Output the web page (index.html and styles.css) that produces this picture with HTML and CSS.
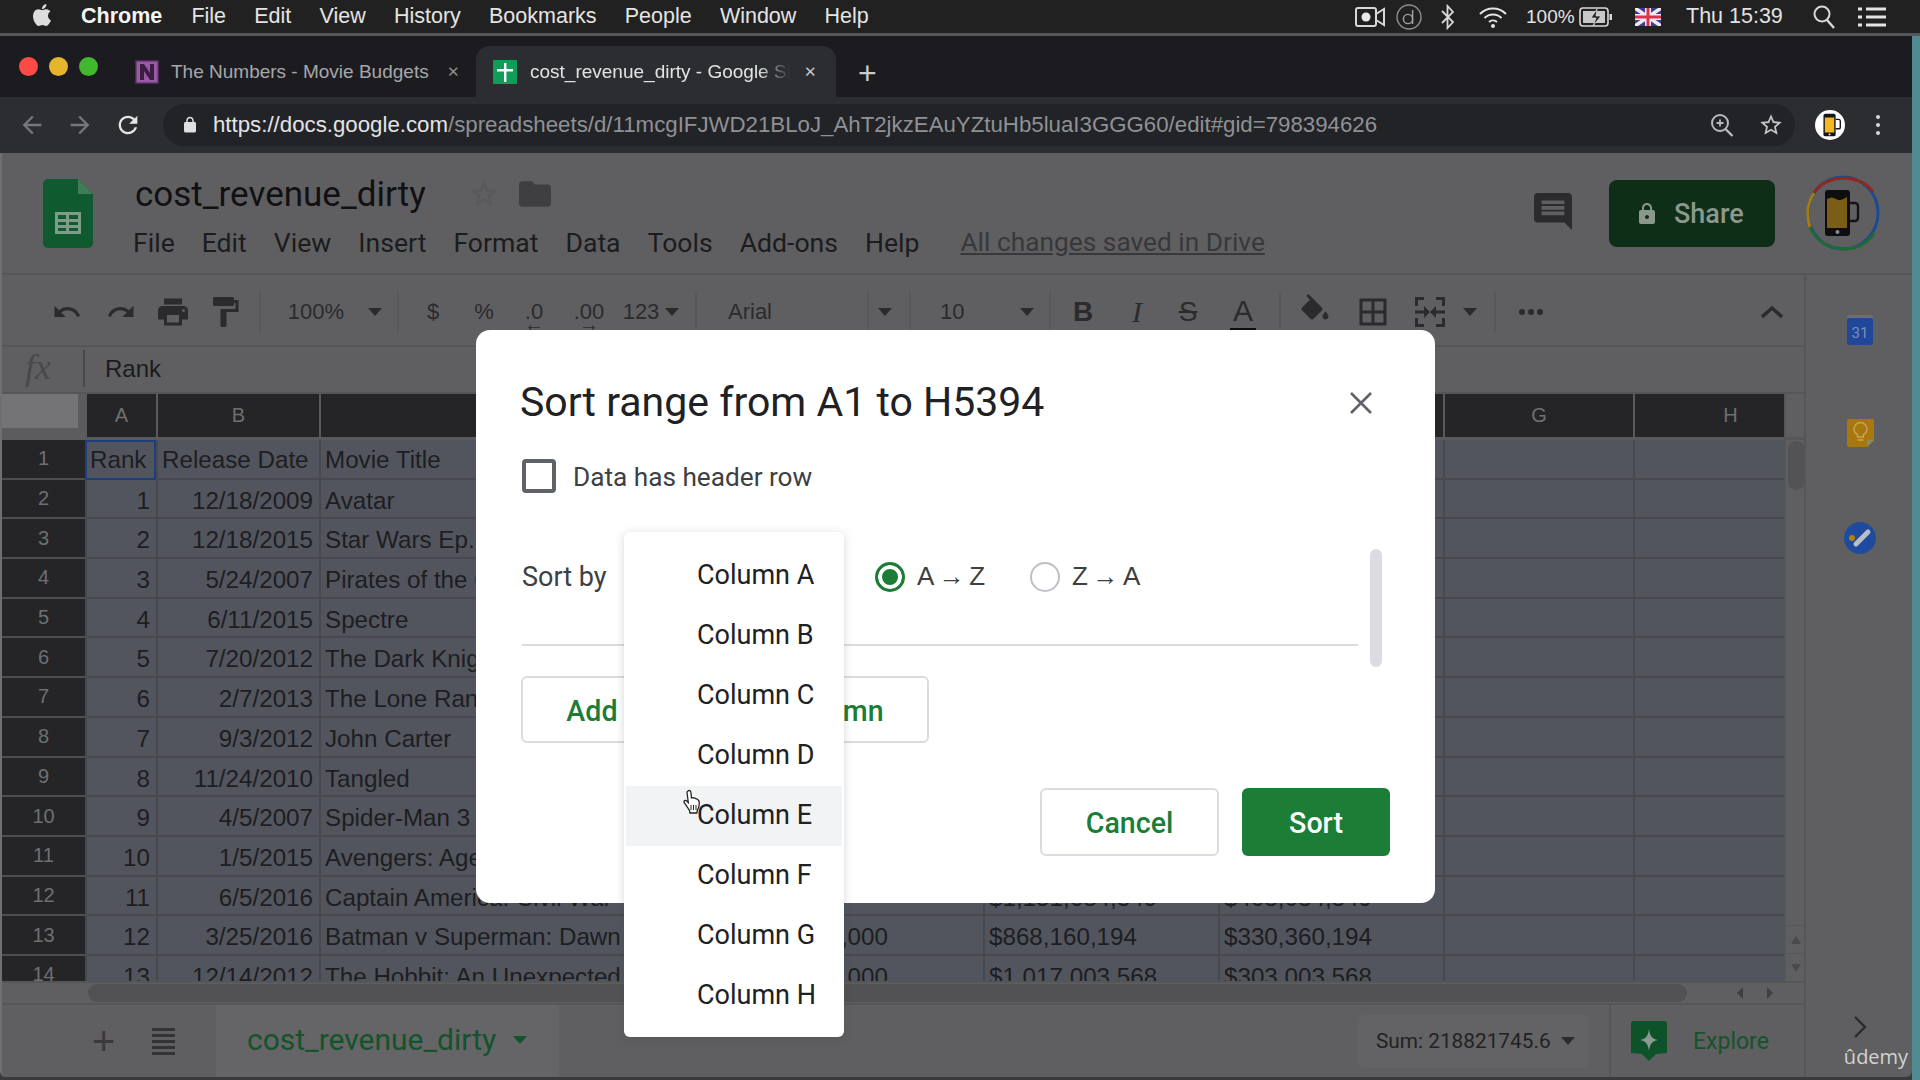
FILE: index.html
```html
<!DOCTYPE html>
<html lang="en">
<head>
<meta charset="utf-8">
<title>cost_revenue_dirty - Google Sheets</title>
<link rel="stylesheet" href="styles.css">
</head>
<body>
<div class="desktop">
<div class="window">

<header class="menubar">
  <svg class="apple" viewBox="0 0 24 24"><path d="M12.152 6.896c-.948 0-2.415-1.078-3.96-1.04-2.04.027-3.91 1.183-4.961 3.014-2.117 3.675-.546 9.103 1.519 12.09 1.013 1.454 2.208 3.09 3.792 3.039 1.52-.065 2.09-.987 3.935-.987 1.831 0 2.35.987 3.96.948 1.637-.026 2.676-1.48 3.676-2.948 1.156-1.688 1.636-3.325 1.662-3.415-.039-.013-3.182-1.221-3.22-4.857-.026-3.04 2.48-4.494 2.597-4.559-1.429-2.09-3.623-2.324-4.39-2.376-2-.156-3.675 1.09-4.61 1.09zM15.53 3.83c.843-1.012 1.4-2.427 1.245-3.83-1.207.052-2.662.805-3.532 1.818-.78.896-1.454 2.338-1.273 3.714 1.338.104 2.715-.688 3.559-1.701"/></svg>
  <nav class="mac-menu">
    <b>Chrome</b><span>File</span><span>Edit</span><span>View</span><span>History</span><span>Bookmarks</span><span>People</span><span>Window</span><span>Help</span>
  </nav>
  <div class="status">
    <svg class="st-video" viewBox="0 0 30 24"><rect x="1" y="3" width="20" height="18" rx="2" fill="none" stroke="#d8d8d8" stroke-width="2"/><circle cx="11" cy="12" r="4.5" fill="#e8e8e8"/><path d="M21 9l8-5v16l-8-5" fill="none" stroke="#d8d8d8" stroke-width="2"/></svg>
    <svg class="st-d" viewBox="0 0 26 26"><circle cx="13" cy="13" r="12" fill="none" stroke="#8e8e8e" stroke-width="1.4"/><circle cx="12" cy="15" r="4.6" fill="none" stroke="#a5a5a5" stroke-width="1.4"/><path d="M16.6 6v14" stroke="#a5a5a5" stroke-width="1.4"/></svg>
    <svg class="st-bt" viewBox="0 0 16 26"><path d="M2 7l11 11-5.5 6V2L13 8 2 19" fill="none" stroke="#d8d8d8" stroke-width="1.8"/></svg>
    <svg class="st-wifi" viewBox="0 0 30 24"><path d="M2 9a18 18 0 0 1 26 0M6.5 13a12 12 0 0 1 17 0M11 17a6 6 0 0 1 8 0" fill="none" stroke="#e4e4e4" stroke-width="2"/><circle cx="15" cy="21" r="2" fill="#e4e4e4"/></svg>
    <span class="st-pct">100%</span>
    <svg class="st-batt" viewBox="0 0 34 22"><rect x="1" y="2" width="28" height="18" rx="3" fill="none" stroke="#d8d8d8" stroke-width="1.6"/><rect x="4" y="5" width="22" height="12" fill="#c8c8c8"/><path d="M18 3l-6 9h5l-3 8 8-10h-5z" fill="#1f1f1f" stroke="#d8d8d8" stroke-width=".8"/><rect x="30.500" y="8" width="2.500" height="6" fill="#d8d8d8"/></svg>
    <svg class="st-flag" viewBox="0 0 26 18"><rect width="26" height="18" fill="#3c3f8f"/><path d="M0 0l26 18M26 0L0 18" stroke="#f3e8ee" stroke-width="3.500"/><path d="M13 0v18M0 9h26" stroke="#f3e8ee" stroke-width="6"/><path d="M13 0v18M0 9h26" stroke="#d9334f" stroke-width="3"/></svg>
    <span class="st-time">Thu 15:39</span>
    <svg class="st-search" viewBox="0 0 22 24"><circle cx="9" cy="9" r="7.500" fill="none" stroke="#d8d8d8" stroke-width="2"/><path d="M14 15l7 8" stroke="#d8d8d8" stroke-width="2.400"/></svg>
    <svg class="st-list" viewBox="0 0 28 22"><path d="M8 3h20M8 11h20M8 19h20" stroke="#e4e4e4" stroke-width="3"/><path d="M0 3h4M0 11h4M0 19h4" stroke="#e4e4e4" stroke-width="3"/></svg>
  </div>
</header>

<div class="tabstrip">
  <div class="lights"><i class="light red"></i><i class="light amber"></i><i class="light lime"></i></div>
  <div class="tab">
    <svg class="fav" viewBox="0 0 24 24"><rect width="24" height="24" fill="#4c2a55"/><rect x="1.500" y="1.500" width="21" height="21" fill="#9a5aa8"/><path d="M5 20V4h4l6 9V4h4v16h-4l-6-9v9z" fill="#3a1f42"/></svg>
    <span class="tab-title">The Numbers - Movie Budgets</span>
    <span class="tab-x">✕</span>
  </div>
  <div class="tab active">
    <svg class="fav" viewBox="0 0 24 24"><rect width="24" height="24" rx="1" fill="#0f9d58"/><path d="M11 3h2.400v19H11zM4 9h16v2.400H4z" fill="#fff"/></svg>
    <span class="tab-title fade">cost_revenue_dirty - Google Sheets</span>
    <span class="tab-x">✕</span>
  </div>
  <span class="tab-new">+</span>
</div>

<div class="toolbar">
  <svg class="nav-ic dim" viewBox="0 0 24 24"><path d="M20 11H7.830l5.590-5.590L12 4l-8 8 8 8 1.410-1.410L7.830 13H20v-2z"/></svg>
  <svg class="nav-ic dim" viewBox="0 0 24 24"><path d="M12 4l-1.410 1.410L16.170 11H4v2h12.170l-5.580 5.590L12 20l8-8z"/></svg>
  <svg class="nav-ic" viewBox="0 0 24 24"><path d="M17.650 6.350C16.200 4.900 14.210 4 12 4c-4.420 0-7.990 3.580-7.990 8s3.570 8 7.990 8c3.730 0 6.840-2.550 7.730-6h-2.080c-.82 2.330-3.040 4-5.650 4-3.310 0-6-2.690-6-6s2.690-6 6-6c1.660 0 3.140.69 4.220 1.780L13 11h7V4l-2.350 2.350z"/></svg>
  <div class="omnibox">
    <svg class="lock-ic" viewBox="0 0 24 24"><path d="M18 8h-1V6c0-2.760-2.240-5-5-5S7 3.240 7 6v2H6c-1.100 0-2 .9-2 2v10c0 1.100.9 2 2 2h12c1.100 0 2-.9 2-2V10c0-1.100-.9-2-2-2zm-2.900 0H8.900V6c0-1.710 1.390-3.100 3.100-3.100 1.710 0 3.100 1.390 3.100 3.100v2z"/></svg>
    <span class="url"><span class="url-host">https://docs.google.com</span>/spreadsheets/d/11mcgIFJWD21BLoJ_AhT2jkzEAuYZtuHb5luaI3GGG60/edit#gid=798394626</span>
    <svg class="omni-zoom" viewBox="0 0 24 24"><circle cx="10" cy="10" r="8" fill="none" stroke="#b9babd" stroke-width="2"/><path d="M15.500 16l7 7" stroke="#b9babd" stroke-width="2.400"/><path d="M6.500 10h7M10 6.500v7" stroke="#b9babd" stroke-width="1.800"/></svg>
    <svg class="omni-star" viewBox="0 0 24 24"><path d="M22 9.240l-7.190-.62L12 2 9.190 8.630 2 9.240l5.460 4.730L5.820 21 12 17.270 18.180 21l-1.630-7.030L22 9.240zM12 15.400l-3.760 2.270 1-4.280-3.320-2.880 4.380-.38L12 6.100l1.710 4.040 4.380.38-3.320 2.880 1 4.280L12 15.400z"/></svg>
  </div>
  <svg class="profile" viewBox="0 0 32 32"><circle cx="16" cy="16" r="16" fill="#fff"/><rect x="9" y="4" width="13" height="24" rx="2" fill="#16161a"/><rect x="10.500" y="8" width="10" height="16" fill="#f2b81e"/><path d="M22 10h3a2 2 0 0 1 2 2v6a2 2 0 0 1-2 2h-3" fill="none" stroke="#16161a" stroke-width="1.500"/><circle cx="15.500" cy="26" r="1" fill="#fff"/></svg>
  <span class="kebab"><i></i><i></i><i></i></span>
</div>

<main class="sheets">
  <div class="doc-head">
    <svg class="doc-logo" viewBox="0 0 50 69"><path d="M5 0h30l15 15v49a5 5 0 0 1-5 5H5a5 5 0 0 1-5-5V5a5 5 0 0 1 5-5z" fill="#0f5a2f"/><path d="M35 0l15 15H35z" fill="#3f7d57"/><path d="M12 33h26v22H12zm3 3v4h8v-4zm11 0v4h9v-4zm-11 7v3h8v-3zm11 0v3h9v-3zm-11 6v3h8v-3zm11 0v3h9v-3z" fill="#7f9c89" fill-rule="evenodd"/></svg>
    <div class="doc-main">
      <div class="doc-titlerow">
        <span class="doc-title">cost_revenue_dirty</span>
        <svg class="doc-star" viewBox="0 0 24 24"><path d="M22 9.240l-7.190-.62L12 2 9.190 8.630 2 9.240l5.460 4.730L5.820 21 12 17.270 18.180 21l-1.630-7.030L22 9.240zM12 15.400l-3.760 2.270 1-4.280-3.320-2.880 4.380-.38L12 6.100l1.710 4.040 4.380.38-3.320 2.880 1 4.280L12 15.400z"/></svg>
        <svg class="doc-folder" viewBox="2 4 20 16"><path d="M10 4H4c-1.100 0-2 .9-2 2v12c0 1.100.9 2 2 2h16c1.100 0 2-.9 2-2V8c0-1.100-.9-2-2-2h-8l-2-2z"/></svg>
      </div>
      <nav class="doc-menu">
        <span>File</span><span>Edit</span><span>View</span><span>Insert</span><span>Format</span><span>Data</span><span>Tools</span><span>Add-ons</span><span>Help</span>
        <a class="saved">All changes saved in Drive</a>
      </nav>
    </div>
    <svg class="comment" viewBox="2 2 20 20" preserveAspectRatio="none"><path d="M21.990 4c0-1.100-.89-2-1.990-2H4c-1.100 0-2 .9-2 2v12c0 1.100.9 2 2 2h14l4 4-.01-18zM18 14H6v-2h12v2zm0-3H6V9h12v2zm0-3H6V6h12v2z"/></svg>
    <div class="share">
      <svg viewBox="0 0 24 24"><path d="M18 8h-1V6c0-2.760-2.240-5-5-5S7 3.240 7 6v2H6c-1.100 0-2 .9-2 2v10c0 1.100.9 2 2 2h12c1.100 0 2-.9 2-2V10c0-1.100-.9-2-2-2zm-6 9c-1.100 0-2-.9-2-2s.9-2 2-2 2 .9 2 2-.9 2-2 2zm3.100-9H8.900V6c0-1.710 1.390-3.100 3.100-3.100 1.710 0 3.100 1.390 3.100 3.100v2z"/></svg>
      <span>Share</span>
    </div>
    <svg class="account" viewBox="0 0 74 76">
      <ellipse cx="37" cy="38" rx="35" ry="36" fill="none" stroke="#1b4a94" stroke-width="3"/>
      <path d="M4 52C.5 41 1 28 8 18" fill="none" stroke="#a67c0e" stroke-width="3"/>
      <path d="M8 18C20 -1 54 -2 67 17" fill="none" stroke="#8c2a20" stroke-width="3"/>
      <path d="M4 52C15 80 56 80 68 58" fill="none" stroke="#1f6a33" stroke-width="3"/>
      <rect x="19" y="15" width="25" height="46" rx="3" fill="#0e0e10"/>
      <path d="M21 24q5-3 9 0t11-2v31H21z" fill="#7a5d17"/>
      <path d="M44 28h5a3 3 0 0 1 3 3v12a3 3 0 0 1-3 3h-5" fill="none" stroke="#141416" stroke-width="2.400"/>
      <circle cx="31.500" cy="57" r="2" fill="#8a8a8a"/>
    </svg>
  </div>

  <div class="work">
    <div class="work-main">
      <div class="ss-tools">
        <svg class="ti" viewBox="0 0 24 24"><path d="M12.500 8c-2.650 0-5.050.99-6.900 2.600L2 7v9h9l-3.620-3.620c1.390-1.160 3.160-1.880 5.120-1.880 3.540 0 6.550 2.310 7.600 5.500l2.370-.78C21.080 11.030 17.150 8 12.500 8z"/></svg>
        <svg class="ti" viewBox="0 0 24 24"><path d="M18.400 10.600C16.550 8.990 14.150 8 11.500 8c-4.650 0-8.580 3.030-9.960 7.220L3.900 16c1.050-3.190 4.050-5.500 7.600-5.500 1.950 0 3.730.72 5.120 1.880L13 16h9V7l-3.600 3.600z"/></svg>
        <svg class="ti big" viewBox="0 0 24 24"><path d="M19 8H5c-1.660 0-3 1.340-3 3v6h4v4h12v-4h4v-6c0-1.660-1.340-3-3-3zm-3 11H8v-5h8v5zm3-7c-.55 0-1-.45-1-1s.45-1 1-1 1 .45 1 1-.45 1-1 1zm-1-9H6v4h12V3z"/></svg>
        <svg class="ti big" viewBox="0 0 24 24"><path d="M18 4V3c0-.55-.45-1-1-1H5c-.55 0-1 .45-1 1v4c0 .55.45 1 1 1h12c.55 0 1-.45 1-1V6h1v4H9v11c0 .55.45 1 1 1h2c.55 0 1-.45 1-1v-9h8V4h-3z"/></svg>
        <i class="sep"></i>
        <span class="tt">100%</span>
        <i class="caret"></i>
        <i class="sep"></i>
        <span class="tt">$</span>
        <span class="tt">%</span>
        <span class="tt dec">.0<small>←</small></span>
        <span class="tt dec">.00<small>→</small></span>
        <span class="tt">123</span>
        <i class="caret"></i>
        <i class="sep"></i>
        <span class="tt left font-name">Arial</span>
        <i class="sep"></i>
        <i class="caret"></i>
        <i class="sep"></i>
        <span class="tt left font-size">10</span>
        <i class="caret"></i>
        <i class="sep"></i>
        <span class="tt fmt bold">B</span>
        <span class="tt fmt ital">I</span>
        <span class="tt fmt strike">S</span>
        <span class="tt fmt color">A</span>
        <i class="sep"></i>
        <svg class="ti big" viewBox="0 0 24 24"><path d="M16.560 8.940L7.620 0 6.210 1.410l2.380 2.380-5.150 5.150c-.59.59-.59 1.540 0 2.120l5.500 5.500c.29.290.68.44 1.060.44s.77-.15 1.060-.44l5.500-5.500c.59-.58.59-1.530 0-2.120zM19 11.500s-2 2.170-2 3.500c0 1.100.9 2 2 2s2-.9 2-2c0-1.330-2-3.500-2-3.500z"/></svg>
        <svg class="ti big" viewBox="0 0 24 24"><path d="M3 3v18h18V3H3zm8 16H5v-6h6v6zm0-8H5V5h6v6zm8 8h-6v-6h6v6zm0-8h-6V5h6v6z"/></svg>
        <svg class="ti big" viewBox="0 0 24 24"><path d="M2 2h6v2H4v4H2zM16 2h6v6h-2V4h-4zM2 16h2v4h4v2H2zM20 16h2v6h-6v-2h4zM2 11h6V8l4 4-4 4v-3H2zM22 11h-6V8l-4 4 4 4v-3h6z"/></svg>
        <i class="caret"></i>
        <i class="sep"></i>
        <span class="more"><i></i><i></i><i></i></span>
        <svg class="chev-up" viewBox="0 0 24 14"><path d="M2 12L12 3l10 9" fill="none" stroke="#2b2b2e" stroke-width="3.500"/></svg>
      </div>

      <div class="formula">
        <span class="fx">fx</span>
        <span class="fx-val">Rank</span>
      </div>

      <div class="gridwrap">
        <div class="grid">
          <div class="row head"><div class="corner-cell"><i></i></div><div>A</div><div>B</div><div></div><div></div><div></div><div></div><div>G</div><div class="col-h">H</div></div>
          <div class="row"><div class="rh">1</div><div class="c sel">Rank</div><div class="c">Release Date</div><div class="c">Movie Title</div><div class="c"></div><div class="c"></div><div class="c"></div><div class="c"></div><div class="c"></div></div>
          <div class="row"><div class="rh">2</div><div class="c n">1</div><div class="c n">12/18/2009</div><div class="c">Avatar</div><div class="c"></div><div class="c"></div><div class="c"></div><div class="c"></div><div class="c"></div></div>
          <div class="row"><div class="rh">3</div><div class="c n">2</div><div class="c n">12/18/2015</div><div class="c">Star Wars Ep. VII: The Force Awakens</div><div class="c"></div><div class="c"></div><div class="c"></div><div class="c"></div><div class="c"></div></div>
          <div class="row"><div class="rh">4</div><div class="c n">3</div><div class="c n">5/24/2007</div><div class="c">Pirates of the Caribbean: At World's End</div><div class="c"></div><div class="c"></div><div class="c"></div><div class="c"></div><div class="c"></div></div>
          <div class="row"><div class="rh">5</div><div class="c n">4</div><div class="c n">6/11/2015</div><div class="c">Spectre</div><div class="c"></div><div class="c"></div><div class="c"></div><div class="c"></div><div class="c"></div></div>
          <div class="row"><div class="rh">6</div><div class="c n">5</div><div class="c n">7/20/2012</div><div class="c">The Dark Knight Rises</div><div class="c"></div><div class="c"></div><div class="c"></div><div class="c"></div><div class="c"></div></div>
          <div class="row"><div class="rh">7</div><div class="c n">6</div><div class="c n">2/7/2013</div><div class="c">The Lone Ranger</div><div class="c"></div><div class="c"></div><div class="c"></div><div class="c"></div><div class="c"></div></div>
          <div class="row"><div class="rh">8</div><div class="c n">7</div><div class="c n">9/3/2012</div><div class="c">John Carter</div><div class="c"></div><div class="c"></div><div class="c"></div><div class="c"></div><div class="c"></div></div>
          <div class="row"><div class="rh">9</div><div class="c n">8</div><div class="c n">11/24/2010</div><div class="c">Tangled</div><div class="c"></div><div class="c"></div><div class="c"></div><div class="c"></div><div class="c"></div></div>
          <div class="row"><div class="rh">10</div><div class="c n">9</div><div class="c n">4/5/2007</div><div class="c">Spider-Man 3</div><div class="c"></div><div class="c"></div><div class="c"></div><div class="c"></div><div class="c"></div></div>
          <div class="row"><div class="rh">11</div><div class="c n">10</div><div class="c n">1/5/2015</div><div class="c">Avengers: Age of Ultron</div><div class="c"></div><div class="c"></div><div class="c"></div><div class="c"></div><div class="c"></div></div>
          <div class="row"><div class="rh">12</div><div class="c n">11</div><div class="c n">6/5/2016</div><div class="c">Captain America: Civil War</div><div class="c"></div><div class="c">$1,151,684,349</div><div class="c">$408,084,349</div><div class="c"></div><div class="c"></div></div>
          <div class="row"><div class="rh">13</div><div class="c n">12</div><div class="c n">3/25/2016</div><div class="c">Batman v Superman: Dawn of Justice</div><div class="c d">$250,000,000</div><div class="c">$868,160,194</div><div class="c">$330,360,194</div><div class="c"></div><div class="c"></div></div>
          <div class="row"><div class="rh">14</div><div class="c n">13</div><div class="c n">12/14/2012</div><div class="c">The Hobbit: An Unexpected Journey</div><div class="c d">$250,000,000</div><div class="c">$1,017,003,568</div><div class="c">$303,003,568</div><div class="c"></div><div class="c"></div></div>
        </div>
        <div class="vscroll">
          <div class="v-corner"></div>
          <div class="v-track"><i class="v-thumb"></i></div>
          <div class="v-btn"><i class="tri-up"></i></div>
          <div class="v-btn"><i class="tri-down"></i></div>
        </div>
      </div>

      <div class="hscroll">
        <i class="h-thumb"></i>
        <span class="h-arrows"><i class="tri-left"></i><i class="tri-right"></i></span>
      </div>

      <div class="sheetbar">
        <span class="sb-plus">+</span>
        <span class="sb-list"><i></i><i></i><i></i><i></i><i></i></span>
        <div class="sb-tab"><span>cost_revenue_dirty</span><i class="caret green"></i></div>
        <div class="sb-sum"><span>Sum: 218821745.6</span><i class="caret"></i></div>
        <div class="sb-explore">
          <svg viewBox="0 0 36 40"><path d="M3 0h30a3 3 0 0 1 3 3v29l-11 1-7 7-7-7-11-1V3a3 3 0 0 1 3-3z" fill="#0e5229"/><path d="M18 8c1 7 3 10 9 11-6 1-8 4-9 11-1-7-3-10-9-11 6-1 8-4 9-11z" fill="#8a9a8f"/></svg>
          <span>Explore</span>
        </div>
      </div>
    </div>

    <aside class="side">
      <svg class="side-cal" viewBox="0 0 26 30"><rect y="0" width="26" height="8" rx="2" fill="#6e6e72"/><rect y="3" width="26" height="27" rx="2" fill="#21479a"/><text x="13" y="23" class="cal-num">31</text></svg>
      <svg class="side-keep" viewBox="0 0 27 28"><path d="M2 0h23a2 2 0 0 1 2 2v19l-7 7H2a2 2 0 0 1-2-2V2a2 2 0 0 1 2-2z" fill="#a8770e"/><path d="M20 28v-7h7z" fill="#8a8a6a"/><path d="M10.500 21h6M10.500 18v-2.500c-2-1-3.500-3-3.500-5.500a6.500 6.500 0 0 1 13 0c0 2.500-1.500 4.500-3.500 5.500V18z" fill="none" stroke="#c9a65a" stroke-width="1.400"/></svg>
      <svg class="side-task" viewBox="0 0 32 32"><circle cx="16" cy="16" r="16" fill="#1f4b9e"/><circle cx="8" cy="16" r="3" fill="#b27f12"/><path d="M12 22L24 10" stroke="#b8bdc8" stroke-width="5" stroke-linecap="round"/></svg>
      <svg class="side-chev" viewBox="0 0 14 24"><path d="M2 2l10 10L2 22" fill="none" stroke="#2b2b2e" stroke-width="2.400"/></svg>
      <span class="udemy">ûdemy</span>
    </aside>
  </div>
</main>
</div>
</div>

<section class="dialog">
  <div class="dlg-head">
    <h2>Sort range from A1 to H5394</h2>
    <svg class="dlg-x" viewBox="0 0 22 22"><path d="M1 1l20 20M21 1L1 21" stroke="#5f6368" stroke-width="2.600"/></svg>
  </div>
  <label class="dlg-check"><i class="box"></i><span>Data has header row</span></label>
  <div class="sort-row">
    <span class="sort-label">Sort by</span>
    <i class="radio on"></i><span class="radio-text">A→Z</span>
    <i class="radio"></i><span class="radio-text">Z→A</span>
  </div>
  <button class="btn add">Add another sort column</button>
  <div class="dlg-actions">
    <button class="btn cancel">Cancel</button>
    <button class="btn primary">Sort</button>
  </div>
  <i class="dlg-scroll"></i>
</section>

<ul class="dropdown">
  <li>Column A</li>
  <li>Column B</li>
  <li>Column C</li>
  <li>Column D</li>
  <li class="hover">Column E</li>
  <li>Column F</li>
  <li>Column G</li>
  <li>Column H</li>
</ul>
<svg class="hand" viewBox="0 0 20 26"><path d="M6 2c1.200-1 2.600-.3 2.800 1l.7 6 1.500-.3 1.800.5 1.700.6 1.500 1c1 .9 1.300 2 1.300 3.200 0 3-.8 5.500-2 7.500l-.5 2.500H8l-.5-2.500L2.500 14c-1-1.300-.5-2.600.8-2.600.9 0 1.900.9 3 2.100L5 3.500C4.900 3 5.400 2.400 6 2z" fill="#fff" stroke="#222" stroke-width="1.300"/><path d="M9 16v5M11.500 16v5M14 16v5" stroke="#222" stroke-width="1"/></svg>
</body>
</html>
```

FILE: styles.css
```css
* { box-sizing: border-box; }
html, body { margin: 0; padding: 0; width: 1920px; height: 1080px; overflow: hidden; }
body { font-family: "Liberation Sans", Arial, sans-serif; background: #4f8b90; position: relative; }
ul { margin: 0; padding: 0; list-style: none; }
i { display: block; font-style: normal; }
svg { display: block; flex: none; }

.desktop { width: 1920px; height: 1080px; padding-right: 8px; }
.window { width: 1912px; height: 1080px; display: flex; flex-direction: column; background: #3a3a3c; }

/* mac menu bar */
.menubar { height: 36px; flex: none; display: flex; align-items: center; background: #212121; border-bottom: 3px solid #55575a; padding: 0 34px 0 31px; margin-right: -8px; color: #eee; font-size: 21.5px; }
.apple { width: 22px; height: 24px; fill: #ddd; margin-top: -3px; }
.mac-menu { display: flex; gap: 28.2px; margin-left: 28px; }
.mac-menu b { color: #f4f4f4; }
.mac-menu span { color: #e4e4e4; }
.mac-menu b + span { margin-left: 1px; }
.status { margin-left: auto; display: flex; align-items: center; color: #e2e2e2; }
.st-video { width: 30px; height: 24px; }
.st-d { width: 26px; height: 26px; margin-left: 11px; }
.st-bt { width: 16px; height: 26px; margin-left: 18px; }
.st-wifi { width: 30px; height: 24px; margin-left: 22px; }
.st-pct { font-size: 19px; margin-left: 18px; width: 45px; }
.st-batt { width: 34px; height: 22px; margin-left: 8px; }
.st-flag { width: 26px; height: 18px; margin-left: 22px; }
.st-time { margin-left: 25px; font-size: 21.5px; width: 97px; white-space: nowrap; }
.st-search { width: 22px; height: 24px; margin-left: 30px; }
.st-list { width: 28px; height: 22px; margin-left: 23px; }

/* chrome tabs */
.tabstrip { height: 61px; flex: none; display: flex; align-items: flex-end; background: #1c1c20; }
.lights { display: flex; gap: 11px; margin-left: 19px; width: 116px; align-self: flex-start; padding-top: 21px; }
.light { width: 19px; height: 19px; border-radius: 50%; }
.red { background: #fc4b47; }
.amber { background: #e5b52c; }
.lime { background: #41b82d; }
.tab { display: flex; align-items: center; height: 51px; width: 341px; color: #a6a7aa; font-size: 19px; white-space: nowrap; }
.fav { width: 24px; height: 24px; }
.tab-title { margin-left: 12px; width: 268px; overflow: hidden; }
.tab-x { font-size: 15px; color: #8d8e91; margin-left: 8px; }
.tab.active { width: 360px; background: #2c2d31; border-radius: 14px 14px 0 0; color: #e3e3e5; padding-left: 17px; }
.tab.active .tab-x { color: #c5c6c8; margin-left: 14px; }
.tab.active .tab-title { margin-left: 13px; width: 260px; }
.fade { -webkit-mask-image: linear-gradient(to right, #000 88%, transparent 100%); mask-image: linear-gradient(to right, #000 88%, transparent 100%); }
.tab-new { color: #c9cacc; font-size: 32px; line-height: 1; margin: 0 0 8px 22px; }

/* chrome toolbar */
.toolbar { height: 56px; flex: none; display: flex; align-items: center; background: #2c2d31; padding-left: 18px; }
.nav-ic { width: 28px; height: 28px; fill: #e4e5e7; margin-right: 20px; }
.nav-ic.dim { fill: #77787b; }
.nav-ic:nth-of-type(3) { margin-right: 21px; }
.omnibox { width: 1632px; height: 42px; border-radius: 21px; background: #222327; display: flex; align-items: center; padding-left: 18px; }
.lock-ic { width: 18px; height: 20px; fill: #dedfe1; }
.url { margin-left: 14px; font-size: 22.25px; color: #8f9195; white-space: nowrap; width: 1497px; }
.url-host { color: #e3e4e6; }
.omni-zoom { width: 24px; height: 24px; margin-left: 0; }
.omni-star { width: 26px; height: 26px; fill: #c5c6c8; margin-left: 24px; }
.profile { width: 30px; height: 30px; margin-left: 20px; }
.kebab { display: flex; flex-direction: column; gap: 4px; margin-left: 31px; }
.kebab i { width: 4px; height: 4px; border-radius: 50%; background: #d8d9db; }

/* sheets */
.sheets { flex: none; height: 924px; background: #5f5f61; display: flex; flex-direction: column; color: #1b1b1d; overflow: hidden; border-left: 2px solid #6f6f72; border-radius: 0 0 6px 6px; }
.doc-head { height: 122px; flex: none; display: flex; border-bottom: 2px solid #565658; padding-left: 41px; }
.doc-logo { width: 50px; height: 69px; margin-top: 26px; }
.doc-main { margin-left: 40px; }
.doc-titlerow { display: flex; align-items: center; margin-top: 22px; height: 38px; }
.doc-title { font-family: Roboto, sans-serif; font-size: 35px; color: #111113; width: 333px; margin-left: 2px; white-space: nowrap; }
.doc-star { width: 32px; height: 32px; fill: #58585a; margin-left: 0; }
.doc-folder { width: 32px; height: 26px; fill: #3f3f42; margin-left: 19px; }
.doc-menu { display: flex; gap: 27px; margin-top: 14px; font-family: Roboto, sans-serif; font-size: 26.6px; color: #1c1c1e; }
.saved { color: #38383b; text-decoration: underline; margin-left: 14px; font-size: 26.3px; }
.comment { width: 38px; height: 37px; fill: #2b2b2d; margin: 40px 0 0 auto; }
.share { width: 166px; height: 67px; margin: 27px 0 0 37px; border-radius: 8px; background: #0e2e18; color: #8b988e; display: flex; align-items: center; padding-left: 29px; font-family: Roboto, sans-serif; font-size: 27px; font-weight: 500; }
.share svg { width: 24px; height: 26px; fill: #8b988e; margin-right: 15px; margin-left: -3px; }
.account { width: 74px; height: 76px; margin: 22px 32px 0 31px; }

.work { flex: 1; min-height: 0; display: flex; }
.work-main { width: 1804px; display: flex; flex-direction: column; border-right: 2px solid #565658; }
.side { flex: 1; display: flex; flex-direction: column; align-items: center; position: relative; padding-left: 2px; }

/* sheets toolbar */
.ss-tools { height: 72px; flex: none; padding-top: 4px; border-bottom: 2px solid #565658; display: grid; align-items: center; justify-items: center; grid-template-columns: 38px 54px 53px 52px 51px 20px 92px 26px 20px 50px 52px 48px 62px 42px 20px 28px 148px 20px 14px 36px 86px 26px 20px 46px 62px 40px 70px 4px 66px 50px 64px 16px 34px 38px 1fr; color: #2b2b2e; font-size: 22px; }
.ss-tools > :first-child { grid-column: 2; }
.ti { width: 30px; height: 30px; fill: #2b2b2e; }
.ti.big { width: 36px; height: 36px; }
.sep { width: 2px; height: 40px; background: #58585b; }
.caret { width: 0; height: 0; border-left: 7px solid transparent; border-right: 7px solid transparent; border-top: 8px solid #2b2b2e; }
.caret.green { border-top-color: #14532b; }
.tt { white-space: nowrap; }
.tt.left { justify-self: start; }
.font-name { padding-left: 18px; }
.font-size { padding-left: 12px; }
.dec { position: relative; }
.dec small { position: absolute; left: 50%; top: 14px; font-size: 20px; font-weight: 700; transform: translateX(-50%); }
.fmt { font-size: 30px; font-family: "Liberation Serif", serif; }
.bold { font-family: "Liberation Sans", sans-serif; font-weight: 700; font-size: 28px; }
.ital { font-style: italic; }
.strike { font-family: "Liberation Sans", sans-serif; text-decoration: line-through; font-size: 28px; }
.color { font-family: "Liberation Sans", sans-serif; border-bottom: 6px solid #0e0e10; padding: 0 3px; line-height: 34px; margin-top: 4px; }
.more { display: flex; gap: 3px; }
.more i { width: 6px; height: 6px; border-radius: 50%; background: #2b2b2e; }
.chev-up { width: 24px; height: 14px; justify-self: end; margin-right: 20px; }

.formula { height: 47px; flex: none; display: flex; align-items: center; border-bottom: 2px solid #565658; padding-bottom: 2px; }
.fx { font-family: "Liberation Serif", serif; font-style: italic; font-size: 36px; color: #49494b; width: 83px; padding-left: 23px; border-right: 2px solid #48484a; height: 37px; line-height: 34px; }
.fx-val { font-size: 24px; margin-left: 20px; color: #1b1b1d; }

/* grid */
.gridwrap { height: 587px; flex: none; display: flex; overflow: hidden; }
.grid { width: 1782px; }
.row { display: grid; grid-template-columns: 83px 71px 163px 414px 250px 235px 225px 190px 151px; height: 39.7px; }
.row.head { height: 46px; color: #6f6f72; font-size: 20px; }
.row.head > div { background: #252527; border-left: 2px solid #5a5a5c; border-bottom: 3px solid #5a5a5c; display: flex; align-items: center; justify-content: center; }
.row.head > .corner-cell { background: #5c5c5e; border: 0; display: block; }
.row.head > .col-h { padding-left: 42px; }
.corner-cell i { width: 76px; height: 34px; background: #747476; }
.rh { background: #252527; color: #6f6f72; font-size: 20px; display: flex; align-items: center; justify-content: center; border-bottom: 2px solid #4e4e50; }
.c { background: #52555d; border-left: 2px solid #48494f; border-bottom: 2px solid #48494f; font-size: 24.2px; color: #1d1e22; padding: 6px 6px 0 4px; white-space: nowrap; overflow: hidden; line-height: 30px; }
.row:nth-child(2) .c { padding-top: 5px; }
.c.n { text-align: right; }
.c.d { padding-left: 5px; }
.c.sel { outline: 2px solid #1c3f82; outline-offset: -2px; position: relative; padding-left: 3px; }

.vscroll { width: 22px; display: flex; flex-direction: column; border-left: 2px solid #565658; }
.v-corner { height: 46px; flex: none; border-bottom: 3px solid #565658; }
.v-track { flex: 1; padding: 1px 0 0 2px; }
.v-thumb { width: 17px; height: 49px; border-radius: 9px; background: #535356; }
.v-btn { height: 28px; flex: none; display: flex; align-items: center; justify-content: center; border-top: 1px solid #565658; }
.tri-up { width: 0; height: 0; border: 5px solid transparent; border-bottom: 8px solid #4a4a4d; border-top: 0; }
.tri-down { width: 0; height: 0; border: 5px solid transparent; border-top: 8px solid #4a4a4d; border-bottom: 0; }

.hscroll { height: 24px; flex: none; display: flex; align-items: center; border-top: 2px solid #565658; border-bottom: 2px solid #565658; padding-left: 86px; }
.h-thumb { width: 1599px; height: 18px; border-radius: 9px; background: #525254; }
.h-arrows { display: flex; gap: 24px; margin-left: 50px; }
.tri-left { width: 0; height: 0; border: 6px solid transparent; border-right: 6px solid #3f3f42; border-left: 0; }
.tri-right { width: 0; height: 0; border: 6px solid transparent; border-left: 6px solid #3f3f42; border-right: 0; }

.sheetbar { flex: 1; display: flex; align-items: center; }
.sb-plus { font-size: 40px; line-height: 1; color: #3a3a3d; margin-left: 90px; width: 24px; }
.sb-list { display: flex; flex-direction: column; gap: 3px; margin-left: 36px; }
.sb-list i { width: 23px; height: 3px; background: #333336; }
.sb-tab { align-self: stretch; width: 343px; margin-left: 41px; background: #656567; display: flex; align-items: center; padding: 0 0 3px 31px; gap: 17px; font-family: Roboto, sans-serif; font-size: 30px; color: #14532b; white-space: nowrap; }
.sb-sum { width: 231px; height: 53px; margin-left: 799px; border-radius: 6px; background: #636365; display: flex; align-items: center; padding-left: 18px; gap: 10px; font-family: Roboto, sans-serif; font-size: 20.8px; color: #222224; white-space: nowrap; }
.sb-explore { align-self: stretch; margin-left: 20px; flex: 1; border-left: 2px solid #565658; display: flex; align-items: center; padding-left: 20px; font-family: Roboto, sans-serif; font-size: 23px; color: #14532b; }
.sb-explore svg { width: 36px; height: 40px; margin-right: 26px; }

/* right rail */
.side-cal { width: 26px; height: 30px; margin-top: 40px; }
.cal-num { font: 15px Roboto, sans-serif; fill: #7d8fb8; text-anchor: middle; }
.side-keep { width: 27px; height: 28px; margin-top: 74px; }
.side-task { width: 32px; height: 32px; margin-top: 75px; }
.side-chev { width: 14px; height: 24px; margin-top: 461px; }
.udemy { margin-top: 4px; font-family: "Open Sans", sans-serif; font-size: 20px; color: #d2d2d2; margin-left: 32px; }

/* dialog */
.dialog { position: absolute; left: 476px; top: 330px; width: 959px; height: 573px; background: #fff; border-radius: 14px; padding: 44px 45px 0 44px; font-family: Roboto, sans-serif; color: #3c4043; }
.dlg-head { display: flex; align-items: center; justify-content: space-between; height: 56px; padding-right: 18px; }
.dlg-head h2 { margin: 0; font-size: 41px; font-weight: 400; color: #202124; white-space: nowrap; }
.dlg-x { width: 22px; height: 22px; margin-top: 2px; }
.dlg-check { display: flex; align-items: center; gap: 17px; margin: 29px 0 0 2px; height: 34px; font-size: 26.2px; }
.dlg-check span { padding-top: 2px; }
.box { width: 34px; height: 34px; border: 4px solid #5f6368; border-radius: 4px; }
.sort-row { display: flex; align-items: center; height: 101px; margin: 52px 32px 0 2px; padding-bottom: 36px; border-bottom: 2px solid #dadce0; font-size: 27px; }
.sort-label { width: 353px; }
.radio { width: 30px; height: 30px; border-radius: 50%; border: 2px solid #bdc1c6; }
.radio.on { border: 3px solid #1b7d36; background: #1b7d36; box-shadow: inset 0 0 0 4px #fff; }
.radio-text { margin: 0 40px 0 12px; font-family: "Liberation Sans", sans-serif; font-size: 26px; letter-spacing: 4.5px; width: 73px; white-space: nowrap; }
.btn { font-family: Roboto, sans-serif; font-size: 28.6px; font-weight: 500; border-radius: 6px; cursor: default; padding: 2px 0 0; }
.add { display: block; width: 408px; height: 67px; margin: 30px 0 0 1px; background: #fff; border: 2px solid #dadce0; color: #1b7d36; white-space: nowrap; }
.dlg-actions { display: flex; justify-content: flex-end; gap: 23px; margin-top: 45px; }
.cancel { width: 179px; height: 68px; background: #fff; border: 2px solid #dadce0; color: #1b7d36; }
.primary { width: 148px; height: 68px; background: #1b7d36; border: 0; color: #fff; }
.dlg-scroll { position: absolute; left: 894px; top: 219px; width: 12px; height: 118px; border-radius: 6px; background: #dadce0; }

/* dropdown */
.dropdown { position: absolute; left: 624px; top: 532px; width: 220px; height: 505px; background: #fff; border-radius: 6px; padding: 14px 2px 0; box-shadow: 0 2px 10px rgba(60,64,67,.22); font-family: Roboto, sans-serif; font-size: 27px; color: #202124; }
.dropdown li { height: 60px; line-height: 58px; padding-left: 71px; }
.dropdown .hover { background: #f1f3f4; }
.hand { position: absolute; left: 682px; top: 789px; width: 20px; height: 26px; }
```
